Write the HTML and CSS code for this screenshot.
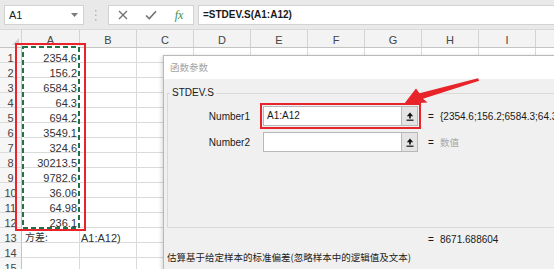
FILE: index.html
```html
<!DOCTYPE html>
<html lang="zh-CN">
<head>
<meta charset="utf-8">
<title>STDEV.S</title>
<link rel="stylesheet" href="styles.css">
</head>
<body>
<div class="app">
  <div class="fbar">
    <div class="namebox">
      <span>A1</span>
      <svg class="dd" width="7" height="4" viewBox="0 0 7 4"><path d="M0 0H7L3.5 4Z" fill="#7a7a7a"/></svg>
    </div>
    <div class="grip">
      <svg width="2" height="11" viewBox="0 0 2 11"><rect x="0" y="0" width="1.5" height="1.5" fill="#b5b5b5"/><rect x="0" y="4.5" width="1.5" height="1.5" fill="#b5b5b5"/><rect x="0" y="9" width="1.5" height="1.5" fill="#b5b5b5"/></svg>
    </div>
    <div class="tools">
      <span><svg width="10" height="10" viewBox="0 0 10 10"><path d="M1 1L9 9M9 1L1 9" stroke="#6f6f6f" stroke-width="1.3"/></svg></span>
      <span><svg width="12" height="10" viewBox="0 0 12 10"><path d="M1 5.5L4.3 8.6L11 1.2" fill="none" stroke="#6f6f6f" stroke-width="1.5"/></svg></span>
      <span class="fx">fx</span>
    </div>
    <div class="formula">=STDEV.S(A1:A12)</div>
  </div>

  <div class="sheet">
    <div class="hrow"><div class="corner"></div><div>A</div><div>B</div><div>C</div><div>D</div><div>E</div><div>F</div><div>G</div><div>H</div><div>I</div><div></div></div>
    <div class="row"><div class="rh">1</div><div class="num">2354.6</div><div></div><div></div><div></div><div></div><div></div><div></div><div></div><div></div><div></div></div>
    <div class="row"><div class="rh">2</div><div class="num">156.2</div><div></div><div></div><div></div><div></div><div></div><div></div><div></div><div></div><div></div></div>
    <div class="row"><div class="rh">3</div><div class="num">6584.3</div><div></div><div></div><div></div><div></div><div></div><div></div><div></div><div></div><div></div></div>
    <div class="row"><div class="rh">4</div><div class="num">64.3</div><div></div><div></div><div></div><div></div><div></div><div></div><div></div><div></div><div></div></div>
    <div class="row"><div class="rh">5</div><div class="num">694.2</div><div></div><div></div><div></div><div></div><div></div><div></div><div></div><div></div><div></div></div>
    <div class="row"><div class="rh">6</div><div class="num">3549.1</div><div></div><div></div><div></div><div></div><div></div><div></div><div></div><div></div><div></div></div>
    <div class="row"><div class="rh">7</div><div class="num">324.6</div><div></div><div></div><div></div><div></div><div></div><div></div><div></div><div></div><div></div></div>
    <div class="row"><div class="rh">8</div><div class="num">30213.5</div><div></div><div></div><div></div><div></div><div></div><div></div><div></div><div></div><div></div></div>
    <div class="row"><div class="rh">9</div><div class="num">9782.6</div><div></div><div></div><div></div><div></div><div></div><div></div><div></div><div></div><div></div></div>
    <div class="row"><div class="rh">10</div><div class="num">36.06</div><div></div><div></div><div></div><div></div><div></div><div></div><div></div><div></div><div></div></div>
    <div class="row"><div class="rh">11</div><div class="num">64.98</div><div></div><div></div><div></div><div></div><div></div><div></div><div></div><div></div><div></div></div>
    <div class="row"><div class="rh">12</div><div class="num">236.1</div><div></div><div></div><div></div><div></div><div></div><div></div><div></div><div></div><div></div></div>
    <div class="row"><div class="rh">13</div><div class="cjk">方差:</div><div class="tight">A1:A12)</div><div></div><div></div><div></div><div></div><div></div><div></div><div></div><div></div></div>
    <div class="row"><div class="rh">14</div><div></div><div></div><div></div><div></div><div></div><div></div><div></div><div></div><div></div><div></div></div>
    <div class="row"><div class="rh">15</div><div></div><div></div><div></div><div></div><div></div><div></div><div></div><div></div><div></div><div></div></div>
  </div>

  <svg class="ants" width="58" height="183" viewBox="0 0 58 183">
    <rect x="1" y="1" width="56" height="181" fill="none" stroke="#ffffff" stroke-width="2"/>
    <rect x="1" y="1" width="56" height="181" fill="none" stroke="#217346" stroke-width="2" stroke-dasharray="5 3"/>
  </svg>
  <div class="redbox"></div>

  <div class="dialog">
    <div class="dtitle">函数参数</div>
    <div class="dbody">
      <fieldset class="group">
        <legend>STDEV.S</legend>
        <div class="arg">
          <span class="alabel">Number1</span>
          <span class="field hl">
            <span class="fin">A1:A12</span>
            <span class="fbtn"><svg width="8" height="9" viewBox="0 0 8 9"><path d="M4 0.5L0.8 4.2H3.2V6.5H4.8V4.2H7.2Z" fill="#111"/><rect x="0.5" y="7.6" width="7" height="1.2" fill="#111"/></svg></span>
          </span>
          <span class="eq">=</span>
          <span class="aval">{2354.6;156.2;6584.3;64.3;694.2;3549.1;324.6;30213.5;9782.6;36.06;64.98;236.1}</span>
        </div>
        <div class="arg">
          <span class="alabel">Number2</span>
          <span class="field">
            <span class="fin"></span>
            <span class="fbtn"><svg width="8" height="9" viewBox="0 0 8 9"><path d="M4 0.5L0.8 4.2H3.2V6.5H4.8V4.2H7.2Z" fill="#111"/><rect x="0.5" y="7.6" width="7" height="1.2" fill="#111"/></svg></span>
          </span>
          <span class="eq">=</span>
          <span class="aval hint">数值</span>
        </div>
      </fieldset>
      <div class="result"><span class="eq">=</span><span class="aval">8671.688604</span></div>
      <div class="desc">估算基于给定样本的标准偏差(忽略样本中的逻辑值及文本)</div>
    </div>
  </div>

  <svg class="arrow" width="554" height="269" viewBox="0 0 554 269">
    <polygon points="404,104 416,88.5 419.5,93.2 478,78.3 479.2,80.8 423,98.8 427.5,102.5" fill="#e8232a"/>
  </svg>
</div>
</body>
</html>
```

FILE: styles.css
```css
* {
  box-sizing: border-box;
}

html,
body {
  margin: 0;
  padding: 0;
}

body {
  width: 554px;
  height: 269px;
  overflow: hidden;
  background: #ffffff;
  font-family: "Liberation Sans", "Noto Sans CJK SC", Arial, sans-serif;
  color: #222222;
}

.app {
  position: relative;
  width: 554px;
  height: 269px;
  overflow: hidden;
}

/* formula bar */
.fbar {
  display: flex;
  align-items: flex-start;
  height: 30px;
  padding: 5px 0 0 4px;
  background: #e9e9e9;
  border-bottom: 1px solid #d9d9d9;
}

.namebox {
  width: 80px;
  height: 20px;
  flex: none;
  display: flex;
  align-items: center;
  justify-content: space-between;
  padding: 0 5px 0 4px;
  background: #ffffff;
  border: 1px solid #d2d2d2;
  font-size: 11px;
  color: #222222;
}

.grip {
  width: 24px;
  height: 20px;
  flex: none;
  display: flex;
  align-items: center;
  justify-content: center;
}

.tools {
  width: 86px;
  height: 20px;
  flex: none;
  display: flex;
  background: #ffffff;
  border: 1px solid #d2d2d2;
}

.tools span {
  width: 28px;
  display: flex;
  align-items: center;
  justify-content: center;
}

.tools .fx {
  font-family: "Liberation Serif", serif;
  font-style: italic;
  font-size: 12px;
  color: #3b8c4f;
}

.formula {
  flex: 1;
  height: 20px;
  margin-left: 4px;
  padding-left: 4px;
  background: #ffffff;
  border: 1px solid #d2d2d2;
  border-right: none;
  font-size: 10px;
  font-weight: bold;
  line-height: 18px;
  color: #1a1a1a;
  white-space: nowrap;
}

/* grid */
.hrow,
.row {
  display: grid;
  grid-template-columns: 22px 58px repeat(9, 57px) 57px;
}

.hrow {
  height: 18px;
  background: #f3f3f3;
  border-bottom: 1px solid #c4c4c4;
}

.hrow > div {
  position: relative;
  height: 17px;
  padding-top: 3px;
  border-right: 1px solid #d3d3d3;
  text-align: center;
  font-size: 11px;
  line-height: 14px;
  color: #444444;
}

.hrow > .corner::after {
  content: "";
  position: absolute;
  right: 2px;
  bottom: 2px;
  border-style: solid;
  border-width: 0 0 7px 7px;
  border-color: transparent transparent #cfcfcf transparent;
}

.row > div {
  height: 15px;
  padding: 5px 2px 0 2px;
  border-right: 1px solid #dadada;
  border-bottom: 1px solid #dadada;
  font-size: 11px;
  line-height: 11px;
  white-space: nowrap;
  color: #333333;
}

.row > .rh {
  background: #f6f6f6;
  border-right-color: #c4c4c4;
  border-bottom-color: #dcdcdc;
  text-align: center;
  color: #444444;
  padding-left: 0;
  padding-right: 0;
}

.row > .num {
  text-align: right;
}

.row > .cjk {
  font-family: "Noto Sans CJK SC", sans-serif;
  font-size: 10px;
  padding-left: 3px;
  padding-top: 3px;
}

.row > .tight {
  padding-left: 1px;
}

/* selection overlays */
.ants {
  position: absolute;
  left: 22px;
  top: 46px;
}

.redbox {
  position: absolute;
  left: 15px;
  top: 43px;
  width: 71px;
  height: 188px;
  border: 2px solid #e8232a;
}

/* dialog */
.dialog {
  position: absolute;
  left: 163px;
  top: 55px;
  width: 420px;
  height: 230px;
  background: #f0f0f0;
  border: 1px solid #b9b9b9;
  box-shadow: -1px 1px 4px rgba(0, 0, 0, 0.18);
  font-size: 10px;
  color: #1a1a1a;
}

.dtitle {
  height: 23px;
  padding-left: 6px;
  background: #ffffff;
  font-family: "Noto Sans CJK SC", sans-serif;
  font-size: 9.5px;
  line-height: 23px;
  color: #a3a3a3;
}

.dbody {
  padding: 7px 0 0 3px;
}

.group {
  margin: 0;
  padding: 6px 0 0 0;
  width: 440px;
  height: 142px;
  border: 1px solid #d9d9d9;
}

.group legend {
  margin-left: 2px;
  padding: 0 2px;
  font-size: 10px;
  line-height: 14px;
  color: #1a1a1a;
}

.arg {
  display: flex;
  align-items: center;
  height: 20px;
  white-space: nowrap;
}

.arg + .arg {
  margin-top: 6px;
}

.alabel {
  width: 82px;
  flex: none;
  text-align: right;
}

.field {
  display: flex;
  flex: none;
  width: 155px;
  height: 20px;
  margin-left: 13px;
}

.fin {
  flex: 1;
  padding-left: 3px;
  background: #ffffff;
  border: 1px solid #b8b8b8;
  line-height: 18px;
}

.fbtn {
  width: 16px;
  display: flex;
  align-items: center;
  justify-content: center;
  background: #e4e4e4;
  border: 1px solid #b8b8b8;
  border-left: none;
}

.hl {
  outline: 2px solid #e8232a;
  outline-offset: 1px;
}

.eq {
  width: 12px;
  flex: none;
  margin-left: 10px;
}

.aval {
  white-space: nowrap;
}

.hint {
  font-family: "Noto Sans CJK SC", sans-serif;
  font-size: 9.5px;
  color: #a8a8a8;
}

.result {
  display: flex;
  margin-top: 5px;
  padding-left: 261px;
  line-height: 14px;
}

.result .eq {
  margin-left: 0;
}

.desc {
  margin-top: 3px;
  font-family: "Noto Sans CJK SC", sans-serif;
  font-size: 9.5px;
  line-height: 14px;
  white-space: nowrap;
  color: #222222;
}

.arrow {
  position: absolute;
  left: 0;
  top: 0;
  pointer-events: none;
}
```
